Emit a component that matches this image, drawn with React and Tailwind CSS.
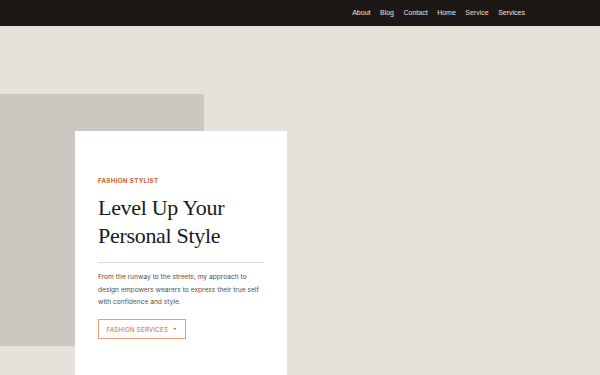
export default function App() {
  const nav = ["About", "Blog", "Contact", "Home", "Service", "Services"];
  return (
    <div className="w-[600px] h-[375px] overflow-hidden bg-[#e5e2dc]" style={{ fontFamily: "Inter, 'Liberation Sans', sans-serif" }}>
      <header className="h-[26px] bg-[#1c1715] flex items-center justify-end pr-[75px]">
        <nav className="flex gap-[9.5px] text-[7px] text-[#e9e4de]" style={{ fontFamily: "'Liberation Sans', Arial, sans-serif" }}>
          {nav.map((n) => (
            <span key={n} className={n === "Service" ? "text-[#f2d8c8]" : ""}>{n}</span>
          ))}
        </nav>
      </header>
      <div className="relative pt-[105px]">
        <div className="absolute left-0 top-[68px] w-[204px] h-[252px] bg-[#cbc8c1]" />
        <div className="relative ml-[75px] w-[212px] h-[260px] bg-white pt-[45px] px-[23px]">
          <div className="text-[6.2px] leading-[10px] font-bold tracking-[0.35px] text-[#c8642e]">FASHION STYLIST</div>
          <h1 className="mt-[8px] text-[22px] leading-[28px] text-[#1a1a1a] tracking-[-0.3px]" style={{ fontFamily: "'Liberation Serif', serif" }}>
            Level Up Your<br />Personal Style
          </h1>
          <div className="mt-[12px] h-px bg-[#dedbd6]" />
          <p className="mt-[8px] text-[6.65px] leading-[12.5px] text-[#55514d] whitespace-nowrap">
            From the runway to the streets, my approach to<br />
            design empowers wearers to express their true self<br />
            with confidence and style.
          </p>
          <button className="mt-[10.5px] w-[88px] h-[20px] border border-[#e2a27e] text-[#c8642e] text-[6px] tracking-[0.3px] flex items-center justify-center gap-[6px]">
            <span>FASHION SERVICES</span>
            <span className="text-[5px]">▸</span>
          </button>
        </div>
      </div>
    </div>
  );
}
